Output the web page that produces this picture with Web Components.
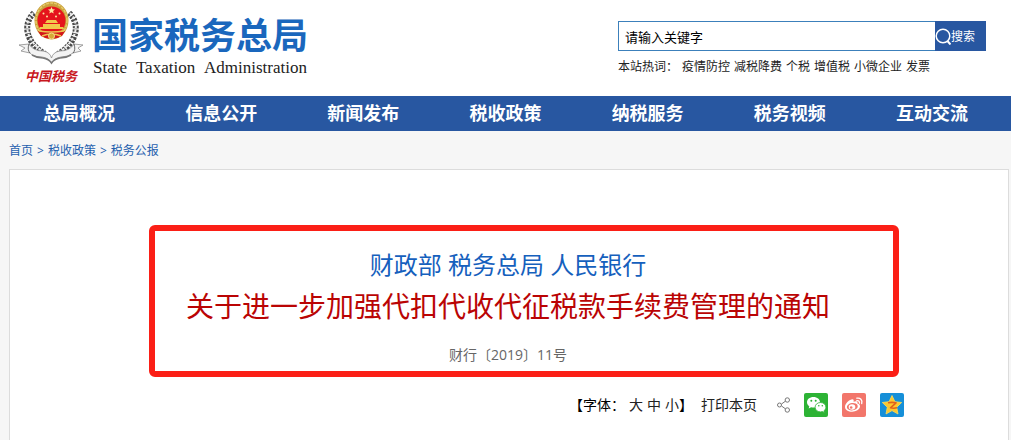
<!DOCTYPE html>
<html lang="zh-CN">
<head>
<meta charset="utf-8">
<title>国家税务总局</title>
<style>
  body {
    margin: 0;
    background-color: #f6f6f6;
    font-family: "Open Sans", "Noto Sans CJK SC", sans-serif;
    font-size: 12px;
    color: #222;
  }
</style>
</head>
<body>
<tax-page>
  <site-header slot="header"></site-header>
  <site-nav slot="nav"></site-nav>
  <bread-crumb slot="crumb"></bread-crumb>
  <notice-head>
    <span slot="org">财政部 税务总局 人民银行</span>
    <span slot="title">关于进一步加强代扣代收代征税款手续费管理的通知</span>
    <span slot="number">财行〔2019〕11号</span>
  </notice-head>
  <page-tools></page-tools>
</tax-page>

<script>
class TaxPage extends HTMLElement {
  constructor() {
    super();
    this.attachShadow({mode: 'open'}).innerHTML = `
      <style>
        :host {
          display: flex;
          flex-direction: column;
          min-height: 100vh;
        }
        main {
          flex: 1;
          margin: 0 2px 0 9px;
          border: 1px solid #dcdcdc;
          border-bottom: 0;
          background-color: #fff;
        }
      </style>
      <slot name="header"></slot>
      <slot name="nav"></slot>
      <slot name="crumb"></slot>
      <main><slot></slot></main>`;
  }
}
customElements.define('tax-page', TaxPage);

class TaxEmblem extends HTMLElement {
  constructor() {
    super();
    this.attachShadow({mode: 'open'}).innerHTML = `
      <style>
        :host {
          display: flex;
          flex-direction: column;
          align-items: center;
          width: 66px;
        }
        svg { display: block; }
        span {
          font-size: 13px;
          line-height: 22px;
          font-style: italic;
          font-weight: bold;
          color: #c8161d;
        }
      </style>
      <svg width="66" height="65" viewBox="18 0 66 65" aria-hidden="true">
        <g fill="none" stroke="#4a4a4a" stroke-width="6" stroke-dasharray="2.500 1.200">
          <path d="M34 13C22 24 26 43 45 54"/>
          <path d="M69 13C81 24 77 43 58 54"/>
        </g>
        <g fill="none" stroke="#ececec" stroke-width="2" stroke-dasharray="3 1.500">
          <path d="M33 13C22 24 27 42 45 53"/>
          <path d="M70 13C81 24 76 42 58 53"/>
        </g>
        <g fill="#f3f3f3" stroke="#8c8c8c" stroke-width=".8" stroke-linejoin="round">
          <path d="M19 45L29 44Q33 51 43 51Q50 52 51.500 58Q53 52 60 51Q70 51 74 44L83 45L78 48L81 51L73 53Q69 57 61 57Q54 58 51.500 63Q49 58 42 57Q33 57 30 53L21 51L25 48Z"/>
          <path d="M30 53Q27 50 29 44M73 53Q76 50 74 44" fill="none" stroke="#444"/>
        </g>
        <path d="M32 55Q37 58 43 58Q49 59 51.500 63Q54 59 60 58Q66 58 71 55" fill="none" stroke="#777" stroke-width="1.500"/>
        <ellipse cx="51.500" cy="20.500" rx="17" ry="19" fill="#c9a13c"/>
        <ellipse cx="51.500" cy="20.500" rx="15.500" ry="17.500" fill="none" stroke="#e6ca68" stroke-width="1.500" stroke-dasharray="3 1"/>
        <circle cx="51.500" cy="20.500" r="14" fill="#e5141c"/>
        <path d="M51.500 7l1 2.300 2.500.2-1.900 1.600.6 2.400-2.200-1.300-2.200 1.300.6-2.400-1.900-1.600 2.500-.2z" fill="#ffe9a0"/>
        <g fill="#ffe9a0">
          <circle cx="43.500" cy="13.500" r="1"/><circle cx="47" cy="16.500" r="1"/>
          <circle cx="56" cy="16.500" r="1"/><circle cx="59.500" cy="13.500" r="1"/>
        </g>
        <path d="M45 23l2-3h9l2 3zM43 27v-3h17v3zM39 29l1-2h23l1 2z" fill="#f2c94c"/>
        <path d="M38 31h27l-3 5q-5 3-10.500 3t-10.500-3z" fill="#d3151c"/>
        <path d="M39 31q12.500 2 25 0M42 36q9.500-4 19 0" fill="none" stroke="#edc64e" stroke-width="1.500"/>
        <circle cx="51.500" cy="36" r="3" fill="#d5a936" stroke="#f3dc87"/>
      </svg>
      <span>中国税务</span>`;
  }
}
customElements.define('tax-emblem', TaxEmblem);

class SiteHeader extends HTMLElement {
  constructor() {
    super();
    this.attachShadow({mode: 'open'}).innerHTML = `
      <style>
        :host {
          display: flex;
          justify-content: space-between;
          box-sizing: border-box;
          height: 96px;
          padding: 0 25px 0 18px;
          background-color: #fff;
        }
        .brand {
          display: flex;
          gap: 8px;
        }
        .name {
          width: 216px;
          padding-top: 16px;
        }
        h1 {
          margin: 0;
          font-family: "Liberation Sans", "Noto Sans CJK SC", sans-serif;
          font-size: 36px;
          line-height: 42px;
          font-weight: bold;
          color: #1a67bd;
          white-space: nowrap;
        }
        .en {
          display: flex;
          justify-content: space-between;
          padding: 0 1px;
          font-family: "Liberation Serif", serif;
          font-size: 17px;
          line-height: 20px;
        }
        .search {
          width: 368px;
          padding-top: 21px;
        }
        form {
          display: flex;
          height: 30px;
        }
        input {
          flex: 1;
          min-width: 0;
          box-sizing: border-box;
          margin: 0;
          padding: 0 6px;
          border: 1px solid #3c80bb;
          border-right: 0;
          font: inherit;
          font-size: 13px;
          color: #000;
          background-color: #fff;
        }
        button {
          display: flex;
          align-items: center;
          width: 51px;
          padding: 0;
          border: 0;
          font: inherit;
          color: #fff;
          background-color: #2857a1;
        }
        .hot {
          display: flex;
          gap: 4px;
          margin-top: 7px;
          line-height: 18px;
          white-space: nowrap;
        }
        .hot a {
          color: inherit;
          text-decoration: none;
        }
      </style>
      <div class="brand">
        <tax-emblem></tax-emblem>
        <div class="name">
          <h1>国家税务总局</h1>
          <div class="en"><span>State</span> <span>Taxation</span> <span>Administration</span></div>
        </div>
      </div>
      <div class="search">
        <form>
          <input type="text" value="请输入关键字" aria-label="请输入关键字">
          <button type="button">
            <svg width="16" height="18" viewBox="0 0 16 18" fill="none" stroke="#fff" stroke-width="1.500" aria-hidden="true">
              <circle cx="8" cy="9" r="6.800"/>
              <path d="M12.500 14l3 3.500" stroke-width="2"/>
            </svg>搜索
          </button>
        </form>
        <div class="hot">
          <span>本站热词：</span>
          <a href="#">疫情防控</a>
          <a href="#">减税降费</a>
          <a href="#">个税</a>
          <a href="#">增值税</a>
          <a href="#">小微企业</a>
          <a href="#">发票</a>
        </div>
      </div>`;
  }
}
customElements.define('site-header', SiteHeader);

class SiteNav extends HTMLElement {
  constructor() {
    super();
    const items = ['总局概况', '信息公开', '新闻发布', '税收政策', '纳税服务', '税务视频', '互动交流'];
    this.attachShadow({mode: 'open'}).innerHTML = `
      <style>
        :host {
          display: block;
          background-color: #2857a1;
        }
        nav {
          display: grid;
          grid-template-columns: repeat(7, 1fr);
          padding: 0 8px;
        }
        a {
          font-size: 18px;
          line-height: 35px;
          font-weight: bold;
          text-align: center;
          text-decoration: none;
          color: #fff;
        }
      </style>
      <nav>${items.map(item => `<a href="#">${item}</a>`).join('')}</nav>`;
  }
}
customElements.define('site-nav', SiteNav);

class BreadCrumb extends HTMLElement {
  constructor() {
    super();
    this.attachShadow({mode: 'open'}).innerHTML = `
      <style>
        :host {
          display: block;
          padding: 2px 9px 0;
          color: #1f5fae;
        }
        nav {
          display: flex;
          gap: 4px;
          line-height: 36px;
        }
        a {
          color: inherit;
          text-decoration: none;
        }
      </style>
      <nav>
        <a href="#">首页</a> <span>&gt;</span>
        <a href="#">税收政策</a> <span>&gt;</span>
        <a href="#">税务公报</a>
      </nav>`;
  }
}
customElements.define('bread-crumb', BreadCrumb);

class NoticeHead extends HTMLElement {
  constructor() {
    super();
    this.attachShadow({mode: 'open'}).innerHTML = `
      <style>
        :host {
          display: block;
          margin: 55px 109px 0 139px;
          padding: 14px 32px 6px 0;
          border: 6px solid #fb1f16;
          border-radius: 6px;
          text-align: center;
        }
        h2 {
          margin: 0;
          font-weight: normal;
          font-size: 28px;
          line-height: 42px;
          color: #ba0404;
        }
        .org {
          display: block;
          font-size: 24px;
          line-height: 40px;
          color: #1560bd;
        }
        p {
          margin: 18px 0 0;
          font-size: 14px;
          line-height: 20px;
          color: #666;
        }
      </style>
      <h2>
        <span class="org"><slot name="org"></slot></span>
        <slot name="title"></slot>
      </h2>
      <p><slot name="number"></slot></p>`;
  }
}
customElements.define('notice-head', NoticeHead);

class PageTools extends HTMLElement {
  constructor() {
    super();
    this.attachShadow({mode: 'open'}).innerHTML = `
      <style>
        :host {
          display: flex;
          justify-content: flex-end;
          align-items: center;
          gap: 8px;
          margin: 16px 104px 0 0;
          font-size: 14px;
          line-height: 24px;
          color: #000;
        }
        .size {
          display: flex;
        }
        .sizes {
          display: flex;
          gap: 4px;
          padding-left: 4px;
        }
        button {
          display: block;
          padding: 0;
          border: 0;
          font: inherit;
          color: #222;
          background: none;
        }
        .share {
          display: flex;
          align-items: center;
          gap: 14px;
          margin-left: 12px;
        }
        svg { display: block; }
      </style>
      <div class="size">
        <span>【字体：</span>
        <div class="sizes">
          <button type="button">大</button>
          <button type="button">中</button>
          <button type="button">小</button>
        </div>
        <span>】</span>
      </div>
      <button type="button">打印本页</button>
      <div class="share">
        <svg width="13" height="16" viewBox="0 0 13 16" fill="none" stroke="#777" aria-hidden="true">
          <circle cx="2.500" cy="8" r="2"/><circle cx="10.300" cy="3" r="2.200"/><circle cx="10.300" cy="13" r="2.200"/>
          <path d="M4.500 7L8.400 4.200M4.500 9L8.400 11.800"/>
        </svg>
        <button type="button" aria-label="微信">
          <svg width="24" height="24" viewBox="0 0 24 24">
            <rect width="24" height="24" rx="2" fill="#2db335"/>
            <path d="M9.500 4C5.600 4 3 6.400 3 9.300c0 1.700.9 3.100 2.300 4L4.700 15.500l2.400-1.200c.8.2 1.600.3 2.400.3 3.700 0 6.500-2.400 6.500-5.300S13.200 4 9.500 4z" fill="#fff"/>
            <path d="M16.500 9.500c-3.100 0-5.400 2.100-5.400 4.700s2.300 4.700 5.400 4.700c.7 0 1.300-.1 1.900-.3l2 1.100-.5-1.900c1.200-.8 2-2.100 2-3.600 0-2.600-2.300-4.700-5.400-4.700z" fill="#fff" stroke="#2db335" stroke-width=".8"/>
            <g fill="#2db335"><circle cx="7.300" cy="7.800" r="1"/><circle cx="11.700" cy="7.800" r="1"/><circle cx="14.800" cy="12.800" r=".8"/><circle cx="18.300" cy="12.800" r=".8"/></g>
          </svg>
        </button>
        <button type="button" aria-label="微博">
          <svg width="24" height="24" viewBox="0 0 24 24">
            <rect width="24" height="24" rx="2" fill="#f2766b"/>
            <path d="M10.500 6.300c1.200 0 1.500 1 1 2.500 2.200-.9 4.500-.8 4 1.600 2 .6 2.800 1.700 2.500 3.400-.5 2.800-3.900 4.900-7.800 4.900-4 0-7.200-1.900-7.200-4.800 0-3.200 4.500-7.600 7.500-7.600z" fill="#fff"/>
            <ellipse cx="10.300" cy="13.700" rx="5.500" ry="3.700" transform="rotate(-8 10.300 13.700)" fill="#f2766b"/>
            <ellipse cx="10" cy="14" rx="3.300" ry="2.800" fill="#fff"/>
            <circle cx="9.200" cy="14.500" r="1.300" fill="#f2766b"/>
            <path d="M14.800 7.700c2-.3 3 .8 2.600 2.500M14.800 5.200c3.600-.7 5.800 1.700 4.900 5.300" fill="none" stroke="#fff" stroke-width="1.300" stroke-linecap="round"/>
          </svg>
        </button>
        <button type="button" aria-label="QQ空间">
          <svg width="24" height="24" viewBox="0 0 24 24">
            <rect width="24" height="24" rx="2" fill="#168fd8"/>
            <path d="M12 2.500l2.900 6.200 6.800.8-5 4.700 1.300 6.800-6-3.400L6 21l1.300-6.800-5-4.700 6.800-.8z" fill="#fdc72e" stroke="#fbdc5a" stroke-width=".8" stroke-linejoin="round"/>
            <path d="M8 9.800q4-.8 8 0l-5.500 5q3 .8 6.500 0" fill="none" stroke="#e0611d" stroke-width="1.600" stroke-linejoin="round"/>
          </svg>
        </button>
      </div>`;
  }
}
customElements.define('page-tools', PageTools);
</script>
</body>
</html>
